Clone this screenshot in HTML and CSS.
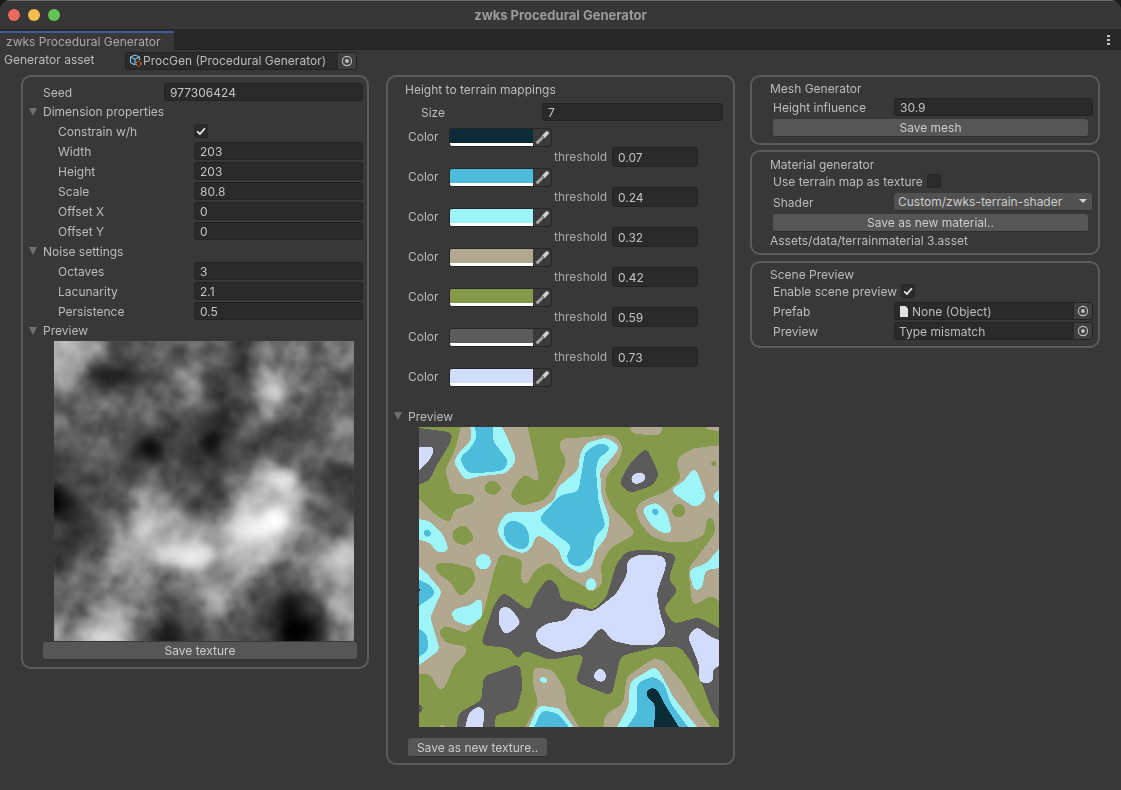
FILE: index.html
```html
<!DOCTYPE html>
<html lang="en">
<head>
<meta charset="utf-8">
<title>zwks Procedural Generator</title>
<link rel="stylesheet" href="styles.css">
</head>
<body>
<svg class="defs" width="0" height="0" aria-hidden="true">
  <defs>
    <filter id="smooth" x="-5%" y="-5%" width="110%" height="110%" color-interpolation-filters="sRGB">
      <feGaussianBlur stdDeviation="10"/>
      <feComponentTransfer><feFuncA type="linear" slope="40" intercept="-19.5"/></feComponentTransfer>
    </filter>
    <filter id="soft" x="-20%" y="-20%" width="140%" height="140%" color-interpolation-filters="sRGB">
      <feGaussianBlur stdDeviation="24"/>
    </filter>
    <filter id="softer" x="-60%" y="-60%" width="220%" height="220%" color-interpolation-filters="sRGB">
      <feGaussianBlur stdDeviation="15"/>
    </filter>
    <filter id="grain" x="0" y="0" width="100%" height="100%" color-interpolation-filters="sRGB">
      <feTurbulence type="fractalNoise" baseFrequency=".014" numOctaves="3" seed="7"/>
      <feColorMatrix type="matrix" values="1.7 0 0 0 -.42 1.7 0 0 0 -.42 1.7 0 0 0 -.42 0 0 0 0 1"/>
      <feGaussianBlur stdDeviation="4"/>
    </filter>
    <symbol id="target" viewBox="0 0 12 12"><circle cx="6" cy="6" r="4.6" fill="none" stroke="#c2c2c2" stroke-width="1.1"/><circle cx="6" cy="6" r="1.9" fill="#c2c2c2"/></symbol>
    <symbol id="tick" viewBox="0 0 14 14"><path d="M3.2 7.4 5.9 10 10.9 4.2" fill="none" stroke="#eeeeee" stroke-width="1.7"/></symbol>
    <symbol id="dropper" viewBox="0 0 16 16"><path d="M2.6 13.4 9 7" fill="none" stroke="#a4a4a4" stroke-width="3"/><path d="M8 5.2 9.6 4 11.8 1.8C12.7 1 13.9 1.300 14.400 1.800 15 2.400 15.200 3.500 14.400 4.300L12.200 6.500 11 8.200Z" fill="#cfcfcf"/></symbol>
  </defs>
</svg>
<div class="window">
  <header class="titlebar">
    <span class="light red"></span><span class="light yellow"></span><span class="light green"></span>
    <span class="wintitle">zwks Procedural Generator</span>
  </header>
  <nav class="tabstrip">
    <div class="tab">zwks Procedural Generator</div>
    <div class="menu"><i></i><i></i><i></i></div>
  </nav>
  <div class="assetrow">
    <span class="assetlabel">Generator asset</span>
    <div class="objfield assetfield">
      <svg class="cube" width="13" height="13" viewBox="0 0 13 13"><path d="M6 1 10.500 3 10.500 6M6 1 1.500 3 1.500 8.500 6 11M1.500 3 6 5.200 10.500 3M6 5.200V11" fill="none" stroke="#7fc4e8" stroke-width="1.100"/><circle cx="9.600" cy="9.600" r="2.400" fill="none" stroke="#e0702a" stroke-width="1.200" stroke-dasharray="1.400 1"/></svg>
      <span class="objtext">ProcGen (Procedural Generator)</span>
      <span class="picker"><svg width="12" height="12"><use href="#target"/></svg></span>
    </div>
  </div>
  <main class="columns">
    <section class="panel left">
      <div class="row seedrow"><span class="lbl lbl-seed">Seed</span><span class="field f-seed">977306424</span></div>
      <div class="row sec"><span class="tri"></span><span class="stxt">Dimension properties</span></div>
      <div class="row"><span class="lbl lbl-in">Constrain w/h</span><span class="check"><svg width="14" height="14"><use href="#tick"/></svg></span></div>
      <div class="row"><span class="lbl lbl-in">Width</span><span class="field f-in">203</span></div>
      <div class="row"><span class="lbl lbl-in">Height</span><span class="field f-in">203</span></div>
      <div class="row"><span class="lbl lbl-in">Scale</span><span class="field f-in">80.8</span></div>
      <div class="row"><span class="lbl lbl-in">Offset X</span><span class="field f-in">0</span></div>
      <div class="row"><span class="lbl lbl-in">Offset Y</span><span class="field f-in">0</span></div>
      <div class="row"><span class="tri"></span><span class="stxt">Noise settings</span></div>
      <div class="row"><span class="lbl lbl-in">Octaves</span><span class="field f-in">3</span></div>
      <div class="row"><span class="lbl lbl-in">Lacunarity</span><span class="field f-in">2.1</span></div>
      <div class="row"><span class="lbl lbl-in">Persistence</span><span class="field f-in">0.5</span></div>
      <div class="row sec"><span class="tri"></span><span class="stxt">Preview</span></div>
      <svg class="noise" width="300" height="300" viewBox="117 63 900 900" role="img" aria-label="Noise preview">
        <rect x="117" y="63" width="900" height="900" fill="#666"/>
        <g filter="url(#soft)">
          <rect x="57" y="3" width="135" height="135" fill="#bbb"/><rect x="192" y="3" width="76" height="135" fill="#999"/><rect x="267" y="3" width="76" height="135" fill="#444"/><rect x="342" y="3" width="76" height="135" fill="#666"/><rect x="417" y="3" width="76" height="135" fill="#666"/><rect x="492" y="3" width="76" height="135" fill="#666"/><rect x="567" y="3" width="76" height="135" fill="#666"/><rect x="642" y="3" width="76" height="135" fill="#444"/><rect x="717" y="3" width="76" height="135" fill="#666"/><rect x="792" y="3" width="76" height="135" fill="#777"/><rect x="867" y="3" width="76" height="135" fill="#777"/><rect x="942" y="3" width="135" height="135" fill="#777"/>
          <rect x="57" y="138" width="135" height="76" fill="#aaa"/><rect x="192" y="138" width="76" height="76" fill="#444"/><rect x="267" y="138" width="76" height="76" fill="#333"/><rect x="342" y="138" width="76" height="76" fill="#444"/><rect x="417" y="138" width="76" height="76" fill="#666"/><rect x="492" y="138" width="76" height="76" fill="#888"/><rect x="567" y="138" width="76" height="76" fill="#444"/><rect x="642" y="138" width="76" height="76" fill="#444"/><rect x="717" y="138" width="76" height="76" fill="#888"/><rect x="792" y="138" width="76" height="76" fill="#777"/><rect x="867" y="138" width="76" height="76" fill="#666"/><rect x="942" y="138" width="135" height="76" fill="#666"/>
          <rect x="57" y="213" width="135" height="76" fill="#666"/><rect x="192" y="213" width="76" height="76" fill="#666"/><rect x="267" y="213" width="76" height="76" fill="#666"/><rect x="342" y="213" width="76" height="76" fill="#666"/><rect x="417" y="213" width="76" height="76" fill="#666"/><rect x="492" y="213" width="76" height="76" fill="#666"/><rect x="567" y="213" width="76" height="76" fill="#444"/><rect x="642" y="213" width="76" height="76" fill="#555"/><rect x="717" y="213" width="76" height="76" fill="#aaa"/><rect x="792" y="213" width="76" height="76" fill="#888"/><rect x="867" y="213" width="76" height="76" fill="#555"/><rect x="942" y="213" width="135" height="76" fill="#666"/>
          <rect x="57" y="288" width="135" height="76" fill="#777"/><rect x="192" y="288" width="76" height="76" fill="#666"/><rect x="267" y="288" width="76" height="76" fill="#666"/><rect x="342" y="288" width="76" height="76" fill="#555"/><rect x="417" y="288" width="76" height="76" fill="#555"/><rect x="492" y="288" width="76" height="76" fill="#444"/><rect x="567" y="288" width="76" height="76" fill="#333"/><rect x="642" y="288" width="76" height="76" fill="#555"/><rect x="717" y="288" width="76" height="76" fill="#555"/><rect x="792" y="288" width="76" height="76" fill="#444"/><rect x="867" y="288" width="76" height="76" fill="#555"/><rect x="942" y="288" width="135" height="76" fill="#777"/>
          <rect x="57" y="363" width="135" height="76" fill="#444"/><rect x="192" y="363" width="76" height="76" fill="#666"/><rect x="267" y="363" width="76" height="76" fill="#555"/><rect x="342" y="363" width="76" height="76" fill="#222"/><rect x="417" y="363" width="76" height="76" fill="#444"/><rect x="492" y="363" width="76" height="76" fill="#444"/><rect x="567" y="363" width="76" height="76" fill="#333"/><rect x="642" y="363" width="76" height="76" fill="#444"/><rect x="717" y="363" width="76" height="76" fill="#555"/><rect x="792" y="363" width="76" height="76" fill="#444"/><rect x="867" y="363" width="76" height="76" fill="#666"/><rect x="942" y="363" width="135" height="76" fill="#777"/>
          <rect x="57" y="438" width="135" height="76" fill="#444"/><rect x="192" y="438" width="76" height="76" fill="#555"/><rect x="267" y="438" width="76" height="76" fill="#555"/><rect x="342" y="438" width="76" height="76" fill="#666"/><rect x="417" y="438" width="76" height="76" fill="#666"/><rect x="492" y="438" width="76" height="76" fill="#444"/><rect x="567" y="438" width="76" height="76" fill="#444"/><rect x="642" y="438" width="76" height="76" fill="#888"/><rect x="717" y="438" width="76" height="76" fill="#bbb"/><rect x="792" y="438" width="76" height="76" fill="#bbb"/><rect x="867" y="438" width="76" height="76" fill="#444"/><rect x="942" y="438" width="135" height="76" fill="#444"/>
          <rect x="57" y="513" width="135" height="76" fill="#111"/><rect x="192" y="513" width="76" height="76" fill="#555"/><rect x="267" y="513" width="76" height="76" fill="#666"/><rect x="342" y="513" width="76" height="76" fill="#888"/><rect x="417" y="513" width="76" height="76" fill="#aaa"/><rect x="492" y="513" width="76" height="76" fill="#555"/><rect x="567" y="513" width="76" height="76" fill="#444"/><rect x="642" y="513" width="76" height="76" fill="#aaa"/><rect x="717" y="513" width="76" height="76" fill="#ccc"/><rect x="792" y="513" width="76" height="76" fill="#bbb"/><rect x="867" y="513" width="76" height="76" fill="#666"/><rect x="942" y="513" width="135" height="76" fill="#444"/>
          <rect x="57" y="588" width="135" height="76" fill="#444"/><rect x="192" y="588" width="76" height="76" fill="#333"/><rect x="267" y="588" width="76" height="76" fill="#777"/><rect x="342" y="588" width="76" height="76" fill="#ccc"/><rect x="417" y="588" width="76" height="76" fill="#999"/><rect x="492" y="588" width="76" height="76" fill="#aaa"/><rect x="567" y="588" width="76" height="76" fill="#999"/><rect x="642" y="588" width="76" height="76" fill="#eee"/><rect x="717" y="588" width="76" height="76" fill="#fff"/><rect x="792" y="588" width="76" height="76" fill="#999"/><rect x="867" y="588" width="76" height="76" fill="#666"/><rect x="942" y="588" width="135" height="76" fill="#666"/>
          <rect x="57" y="663" width="135" height="76" fill="#333"/><rect x="192" y="663" width="76" height="76" fill="#666"/><rect x="267" y="663" width="76" height="76" fill="#aaa"/><rect x="342" y="663" width="76" height="76" fill="#aaa"/><rect x="417" y="663" width="76" height="76" fill="#ddd"/><rect x="492" y="663" width="76" height="76" fill="#ddd"/><rect x="567" y="663" width="76" height="76" fill="#aaa"/><rect x="642" y="663" width="76" height="76" fill="#ccc"/><rect x="717" y="663" width="76" height="76" fill="#bbb"/><rect x="792" y="663" width="76" height="76" fill="#888"/><rect x="867" y="663" width="76" height="76" fill="#aaa"/><rect x="942" y="663" width="135" height="76" fill="#ccc"/>
          <rect x="57" y="738" width="135" height="76" fill="#666"/><rect x="192" y="738" width="76" height="76" fill="#666"/><rect x="267" y="738" width="76" height="76" fill="#888"/><rect x="342" y="738" width="76" height="76" fill="#999"/><rect x="417" y="738" width="76" height="76" fill="#666"/><rect x="492" y="738" width="76" height="76" fill="#999"/><rect x="567" y="738" width="76" height="76" fill="#999"/><rect x="642" y="738" width="76" height="76" fill="#888"/><rect x="717" y="738" width="76" height="76" fill="#666"/><rect x="792" y="738" width="76" height="76" fill="#555"/><rect x="867" y="738" width="76" height="76" fill="#888"/><rect x="942" y="738" width="135" height="76" fill="#aaa"/>
          <rect x="57" y="813" width="135" height="76" fill="#666"/><rect x="192" y="813" width="76" height="76" fill="#666"/><rect x="267" y="813" width="76" height="76" fill="#aaa"/><rect x="342" y="813" width="76" height="76" fill="#777"/><rect x="417" y="813" width="76" height="76" fill="#555"/><rect x="492" y="813" width="76" height="76" fill="#666"/><rect x="567" y="813" width="76" height="76" fill="#aaa"/><rect x="642" y="813" width="76" height="76" fill="#666"/><rect x="717" y="813" width="76" height="76" fill="#444"/><rect x="792" y="813" width="76" height="76" fill="#111"/><rect x="867" y="813" width="76" height="76" fill="#555"/><rect x="942" y="813" width="135" height="76" fill="#aaa"/>
          <rect x="57" y="888" width="135" height="135" fill="#888"/><rect x="192" y="888" width="76" height="135" fill="#bbb"/><rect x="267" y="888" width="76" height="135" fill="#ccc"/><rect x="342" y="888" width="76" height="135" fill="#666"/><rect x="417" y="888" width="76" height="135" fill="#222"/><rect x="492" y="888" width="76" height="135" fill="#444"/><rect x="567" y="888" width="76" height="135" fill="#666"/><rect x="642" y="888" width="76" height="135" fill="#555"/><rect x="717" y="888" width="76" height="135" fill="#444"/><rect x="792" y="888" width="76" height="135" fill="#000"/><rect x="867" y="888" width="76" height="135" fill="#222"/><rect x="942" y="888" width="135" height="135" fill="#888"/>
        </g>
        <g filter="url(#softer)">
          <ellipse cx="782" cy="600" rx="35" ry="35" fill="#fff"/>
          <ellipse cx="310" cy="168" rx="70" ry="20" fill="#1c1c1c"/>
          <ellipse cx="410" cy="385" rx="32" ry="32" fill="#0c0c0c"/>
          <ellipse cx="590" cy="360" rx="28" ry="32" fill="#0f0f0f"/>
          <ellipse cx="620" cy="290" rx="20" ry="30" fill="#1a1a1a"/>
          <ellipse cx="775" cy="215" rx="40" ry="30" fill="#d0d0d0"/>
          <ellipse cx="800" cy="480" rx="45" ry="30" fill="#dcdcdc"/>
          <ellipse cx="535" cy="705" rx="70" ry="25" fill="#e8e8e8"/>
          <ellipse cx="845" cy="930" rx="40" ry="30" fill="#000"/>
          <ellipse cx="120" cy="540" rx="18" ry="40" fill="#000"/>
        </g>
        <rect class="grain" x="117" y="63" width="900" height="900" filter="url(#grain)"/>
      </svg>
      <button class="btn btn-wide">Save texture</button>
    </section>

    <section class="panel middle">
      <div class="title t-mid">Height to terrain mappings</div>
      <div class="sizerow"><span class="lbl lbl-size">Size</span><span class="field f-size">7</span></div>
      <div class="colorrow"><span class="lbl lbl-col">Color</span><span class="color"><span class="swatch c1"></span><span class="drop"><svg width="16" height="16"><use href="#dropper"/></svg></span></span></div>
      <div class="threshrow"><span class="tlbl">threshold</span><span class="field f-th">0.07</span></div>
      <div class="colorrow"><span class="lbl lbl-col">Color</span><span class="color"><span class="swatch c2"></span><span class="drop"><svg width="16" height="16"><use href="#dropper"/></svg></span></span></div>
      <div class="threshrow"><span class="tlbl">threshold</span><span class="field f-th">0.24</span></div>
      <div class="colorrow"><span class="lbl lbl-col">Color</span><span class="color"><span class="swatch c3"></span><span class="drop"><svg width="16" height="16"><use href="#dropper"/></svg></span></span></div>
      <div class="threshrow"><span class="tlbl">threshold</span><span class="field f-th">0.32</span></div>
      <div class="colorrow"><span class="lbl lbl-col">Color</span><span class="color"><span class="swatch c4"></span><span class="drop"><svg width="16" height="16"><use href="#dropper"/></svg></span></span></div>
      <div class="threshrow"><span class="tlbl">threshold</span><span class="field f-th">0.42</span></div>
      <div class="colorrow"><span class="lbl lbl-col">Color</span><span class="color"><span class="swatch c5"></span><span class="drop"><svg width="16" height="16"><use href="#dropper"/></svg></span></span></div>
      <div class="threshrow"><span class="tlbl">threshold</span><span class="field f-th">0.59</span></div>
      <div class="colorrow"><span class="lbl lbl-col">Color</span><span class="color"><span class="swatch c6"></span><span class="drop"><svg width="16" height="16"><use href="#dropper"/></svg></span></span></div>
      <div class="threshrow"><span class="tlbl">threshold</span><span class="field f-th">0.73</span></div>
      <div class="colorrow"><span class="lbl lbl-col">Color</span><span class="color"><span class="swatch c7"></span><span class="drop"><svg width="16" height="16"><use href="#dropper"/></svg></span></span></div>
      <div class="row previewrow"><span class="tri"></span><span class="stxt">Preview</span></div>
      <svg class="terrain" width="300" height="300" viewBox="27 21 900 900" role="img" aria-label="Terrain preview" shape-rendering="crispEdges">
        <rect class="fg" x="27" y="21" width="900" height="900"/>
        <g class="ft" filter="url(#smooth)">
          <path d="M160-10H345L362 60 378 130 392 197 345 160 320 190 298 228 335 258 405 240 440 190 470 125 445 75 455 55 520 52 590 45 620 50 640 85 625 125 590 165 585 215 605 260 680 340 600 385 570 440 580 490 545 520 510 490 470 470 420 425 375 450 345 505 330 470 340 420 270 400 250 460 220 580 170 640 100 615 85 640 110 670 175 680 170 700 130 740 110 790 90 820 60 760 0 765V235H27L70 280 122 312 130 270 190 250 200 225 125 220 105 150 135 90Z"/>
          <path d="M655 35 665 10H762L750 48 680 42Z"/>
          <path d="M880 10H960V38L885 28Z"/>
          <path d="M960 72 850 85 805 110 800 135 815 175 770 215 700 240 675 265 690 310 725 350 770 365 840 365 885 345 890 290 912 290 915 340 870 400 835 445 840 500 848 560 905 525 960 575Z"/>
          <path d="M368 740 430 750 465 810 470 860 525 950H330L385 850 368 790Z"/>
          <path d="M575 950 585 885 640 850 650 770 730 715 760 720 820 790 870 880 925 950Z"/>
          <path d="M55 950 105 903 112 950Z"/>
        </g>
        <g class="fg" filter="url(#smooth)">
          <path d="M225 190 250 178 282 207 250 228 222 215Z"/>
          <path d="M125 330 165 313 197 355 165 378 130 365Z"/>
          <path d="M72 428 130 430 190 445 197 490 150 535 125 490 78 455Z"/>
          <circle cx="806" cy="272" r="22"/>
          <circle cx="911" cy="131" r="13"/>
        </g>
        <g class="fy" filter="url(#smooth)">
          <path d="M0 20 130 38 120 70 75 145 60 180 0 205Z"/>
          <path d="M710 82 748 165 728 197 660 220 626 190 660 130Z"/>
          <path d="M280 515 360 575 372 530 415 472 445 500 452 540 500 548 550 572 590 530 620 430 650 395 700 388 800 402 775 480 805 510 760 565 790 612 865 592 960 640V950L905 870 880 800 840 720 810 680 740 680 632 708 605 828 495 785 525 700 420 720 340 690 325 725 300 685 212 675 250 560Z"/>
          <path d="M330 730 338 800 320 870 255 885 255 950H138L145 880 215 840 220 770Z"/>
          <path d="M0 843 50 860 0 905Z"/>
        </g>
        <g class="fl" filter="url(#smooth)">
          <path d="M0 85 78 78 60 120 0 175Z"/>
          <path d="M660 165 702 153 710 182 668 197Z"/>
          <path d="M650 420 690 403 765 408 768 440 740 520 750 580 770 640 740 674 660 674 605 662 575 618 520 682 440 698 383 668 375 635 410 610 470 600 490 562 550 575 620 520 650 465Z"/>
          <path d="M268 562 300 562 336 610 285 648 265 610Z"/>
          <path d="M833 650 860 618 900 650 960 672V720L905 750 912 788 868 788 866 730Z"/>
          <path d="M548 765 570 739 591 760 584 790 551 779Z"/>
          <path d="M160 950 175 880 207 856 225 870 215 950Z"/>
        </g>
        <g class="fc" filter="url(#smooth)">
          <path d="M178-10H262L295 60 320 120 290 160 200 170 165 182 130 125 150 95 185 60Z"/>
          <path d="M265 315 290 278 380 275 435 240 440 205 505 150 510 100 530 68 590 52 632 80 600 120 570 150 575 230 600 300 590 350 555 395 545 445 510 462 460 430 445 385 380 340 365 385 340 402 290 382 263 340Z"/>
          <path d="M0 293 60 303 100 345 120 397 75 397 65 370 0 350Z"/>
          <path d="M0 415 55 465 97 515 60 590 90 690 0 755Z"/>
          <circle cx="220" cy="425" r="25"/>
          <ellipse cx="543" cy="493" rx="17" ry="22"/>
          <path d="M122 570 185 555 215 525 218 590 180 618 130 602Z"/>
          <path d="M855 138 890 232 860 265 815 237 778 210 820 185Z"/>
          <path d="M960 190 903 225 960 290Z"/>
          <path d="M960 348 890 430 835 450 855 520 878 500 885 450 960 440Z"/>
          <path d="M693 265 740 246 772 280 788 342 750 337 720 312Z"/>
          <path d="M605 950 655 860 660 785 737 738 757 770 792 835 885 950Z"/>
          <path d="M345 950 385 856 450 865 512 950Z"/>
          <path d="M383 765 420 776 416 792 386 788Z"/>
        </g>
        <g class="fb" filter="url(#smooth)">
          <path d="M190-10H250V65L297 125 280 152 200 160 170 157 148 115 180 85 200 55Z"/>
          <path d="M383 300 450 225 505 215 520 130 525 95 570 68 610 82 565 115 558 150 565 240 587 320 555 350 545 410 510 442 475 432 470 400 490 380 440 345 400 310Z"/>
          <path d="M278 325 305 298 345 315 360 350 352 387 320 387 288 365Z"/>
          <path d="M33 335 55 323 73 347 46 355Z"/>
          <path d="M0 470 55 490 80 520 0 578Z"/>
          <path d="M0 612 50 640 56 690 0 730Z"/>
          <path d="M718 270 737 259 755 280 735 293Z"/>
          <path d="M630 950 680 880 680 790 730 768 762 790 782 850 855 950Z"/>
          <path d="M360 950 395 870 445 880 498 950Z"/>
        </g>
        <g class="fd" filter="url(#smooth)">
          <path d="M0 485 42 510 0 535Z"/>
          <path d="M732 950 735 850 708 830 712 804 739 804 762 850 825 950Z"/>
        </g>
      </svg>
      <button class="btn btn-tex">Save as new texture..</button>
    </section>

    <div class="rightcol">
      <section class="panel mesh">
        <div class="title">Mesh Generator</div>
        <div class="rrow"><span class="lbl lbl-r">Height influence</span><span class="field f-r">30.9</span></div>
        <button class="btn btn-r">Save mesh</button>
      </section>
      <section class="panel material">
        <div class="title">Material generator</div>
        <div class="rrow rcheck"><span class="lbl-auto">Use terrain map as texture</span><span class="check"></span></div>
        <div class="rrow rgap"><span class="lbl lbl-r">Shader</span><span class="dropdown">Custom/zwks-terrain-shader<i class="caret"></i></span></div>
        <button class="btn btn-r">Save as new material..</button>
        <div class="title path">Assets/data/terrainmaterial 3.asset</div>
      </section>
      <section class="panel scene">
        <div class="title">Scene Preview</div>
        <div class="rrow rcheck"><span class="lbl-auto">Enable scene preview</span><span class="check"><svg width="14" height="14"><use href="#tick"/></svg></span></div>
        <div class="rrow rgap2"><span class="lbl lbl-r">Prefab</span><span class="objfield f-obj"><svg class="doc" width="10" height="11" viewBox="0 0 10 11"><path d="M1 0H6.500L9 2.500V11H1Z" fill="#e2e2e2"/></svg><span class="objtext">None (Object)</span><span class="picker"><svg width="12" height="12"><use href="#target"/></svg></span></span></div>
        <div class="rrow"><span class="lbl lbl-r">Preview</span><span class="objfield f-obj"><span class="objtext plain">Type mismatch</span><span class="picker"><svg width="12" height="12"><use href="#target"/></svg></span></span></div>
      </section>
    </div>
  </main>
</div>
</body>
</html>
```

FILE: styles.css
```css
* { box-sizing: border-box; }
html, body { margin: 0; height: 100%; background: #1a1a1a; overflow: hidden; }
body { font: 12px/16px Inter, "Liberation Sans", sans-serif; color: #bcbcbc; }
.defs { position: absolute; }
.window { width: 1121px; height: 790px; background: #383838; border-radius: 10px 10px 0 0; overflow: hidden; display: flex; flex-direction: column; }

.titlebar { height: 29px; flex: none; background: #373737; border-top: 1px solid #6a6a6a; display: flex; align-items: center; padding: 0 0 0 8px; gap: 8px; position: relative; }
.light { width: 12px; height: 12px; border-radius: 50%; }
.red { background: #ee6a5f; }
.yellow { background: #f5bd4f; }
.green { background: #61c454; }
.wintitle { position: absolute; left: 0; right: 0; top: 6px; text-align: center; font-weight: 700; color: #9b9b9b; font-size: 13px; }

.tabstrip { height: 21px; flex: none; background: #282828; border-bottom: 1px solid #222; display: flex; justify-content: space-between; padding-top: 2px; }
.tab { width: 174px; background: #383838; border-top: 2px solid #3b5f92; padding-left: 6px; line-height: 17px; color: #a8a8a8; height: 20px; }
.menu { width: 3px; margin: 4px 11px 0 0; display: flex; flex-direction: column; gap: 2px; }
.menu i { width: 3px; height: 2px; background: #c4c4c4; }

.assetrow { height: 20px; flex: none; display: flex; align-items: center; padding-left: 4px; }
.assetlabel { width: 121px; }
.objfield { background: #2a2a2a; border: 1px solid #232323; border-radius: 3px; height: 18px; display: flex; align-items: center; position: relative; }
.assetfield { width: 232px; padding-left: 3px; background: #2b2b2b; margin-top: 1px; }
.cube { flex: none; margin-right: 1px; }
.objtext { white-space: nowrap; flex: 1; color: #bcbcbc; }
.f-obj .objtext { padding-top: 1px; }
.objtext.plain { padding-left: 4px; }
.picker { flex: none; width: 18px; height: 16px; background: #3f3f3f; display: flex; align-items: center; justify-content: center; border-radius: 0 2px 2px 0; }

.columns { display: flex; align-items: flex-start; padding: 5px 0 0 21px; }
.panel { border: 2px solid #5b5b5b; border-radius: 10px; flex: none; }
.left { width: 348px; height: 594px; padding-top: 5px; margin-right: 17px; }
.middle { width: 349px; height: 690px; margin-right: 15px; }
.rightcol { width: 350px; display: flex; flex-direction: column; }

.row { height: 20px; display: flex; align-items: center; padding-left: 6px; }
.sec { height: 19px; }
.tri { width: 0; height: 0; border-left: 4.5px solid transparent; border-right: 4.5px solid transparent; border-top: 8px solid #6f6f6f; margin-right: 6px; flex: none; }
.lbl, .lbl-auto, .stxt { flex: none; padding-top: 1px; }
.tlbl { flex: none; }
.lbl-seed { margin-left: 14px; width: 121px; padding-top: 2px; }
.lbl-in { margin-left: 29px; width: 136px; }
.field { display: flex; align-items: center; height: 18px; background: #2a2a2a; border: 1px solid #232323; border-radius: 3px; padding: 2px 0 0 5px; color: #c4c4c4; flex: none; }
.f-seed { width: 199px; }
.f-in { width: 169px; }
.check { width: 14px; height: 14px; background: #2b2b2b; border: 1px solid #262626; border-radius: 2px; flex: none; display: flex; align-items: center; justify-content: center; }
.check svg { flex: none; }
.noise { display: block; margin: 1px 0 1px 31px; }
.grain { mix-blend-mode: overlay; opacity: .35; }
.btn { display: block; font: inherit; color: #cccccc; background: #565656; border: 0; border-bottom: 1px solid #2e2e2e; border-radius: 3px; height: 18px; padding: 1px 0 0; text-align: center; line-height: 16px; }
.btn-wide { width: 314px; margin-left: 20px; }

.title { padding-left: 18px; height: 20px; line-height: 20px; }
.t-mid { padding-left: 17px; margin-top: 3px; height: 19px; }
.sizerow { display: flex; align-items: center; height: 18px; margin-top: 4px; }
.lbl-size { margin-left: 33px; width: 121px; padding-top: 2px; }
.f-size { width: 181px; }
.colorrow { display: flex; align-items: flex-start; height: 19px; margin-top: 7px; }
.colorrow + .threshrow { margin-top: 0; }
.threshrow + .colorrow { margin-top: 1px; }
.lbl-col { margin-left: 20px; width: 41px; line-height: 18px; padding-top: 0; }
.color { display: flex; width: 103px; height: 19px; background: #2a2a2a; border: 1px solid #262626; border-radius: 3px; overflow: hidden; }
.swatch { width: 83px; height: 100%; border-bottom: 3px solid #fff; }
.c1 { background: #0b2c36; }
.c2 { background: #4dbcdc; }
.c3 { background: #9ef5f9; }
.c4 { background: #b1a88f; }
.c5 { background: #84994a; }
.c6 { background: #5b5b5b; }
.c7 { background: #d2dcfb; }
.drop { flex: 1; background: #3a3a3a; display: flex; align-items: center; justify-content: center; }
.threshrow { display: flex; align-items: center; height: 20px; padding-left: 166px; }
.tlbl { width: 58px; color: #a8a8a8; }
.f-th { width: 86px; height: 20px; }
.previewrow { margin-top: 19px; }
.terrain { display: block; margin: 1px 0 0 31px; }
.btn-tex { width: 139px; margin: 11px 0 0 20px; height: 19px; }

.fg { fill: #84994a; }
.ft { fill: #b1a88f; }
.fy { fill: #5b5b5b; }
.fl { fill: #d2dcfb; }
.fc { fill: #9ef5f9; }
.fb { fill: #4dbcdc; }
.fd { fill: #0b2c36; }

.mesh { height: 70px; margin-bottom: 5px; }
.material { height: 105px; margin-bottom: 6px; }
.scene { height: 87px; }
.mesh .title { margin-top: 3px; height: 17px; line-height: 18px; }
.material .title { margin-top: 4px; height: 17px; line-height: 18px; }
.scene .title { margin-top: 3px; height: 17px; line-height: 18px; }
.material .path { margin-top: 0; height: 18px; }
.rrow { display: flex; align-items: center; height: 20px; padding-left: 21px; }
.rcheck { height: 16px; }
.rgap { margin-top: 3px; }
.rgap2 { margin-top: 2px; }
.lbl-r { width: 121px; }
.lbl-auto { white-space: nowrap; margin-right: 4px; }
.f-r { width: 199px; }
.btn-r { width: 315px; margin: 2px 0 0 21px; }
.dropdown { width: 198px; height: 18px; background: #515151; border-radius: 3px; border-bottom: 1px solid #2e2e2e; padding-left: 4px; line-height: 17px; position: relative; color: #cccccc; white-space: nowrap; }
.caret { position: absolute; right: 5px; top: 6px; width: 0; height: 0; border-left: 4px solid transparent; border-right: 4px solid transparent; border-top: 4px solid #d0d0d0; }
.f-obj { width: 199px; }
.doc { margin: 0 3px 0 4px; flex: none; }
```
